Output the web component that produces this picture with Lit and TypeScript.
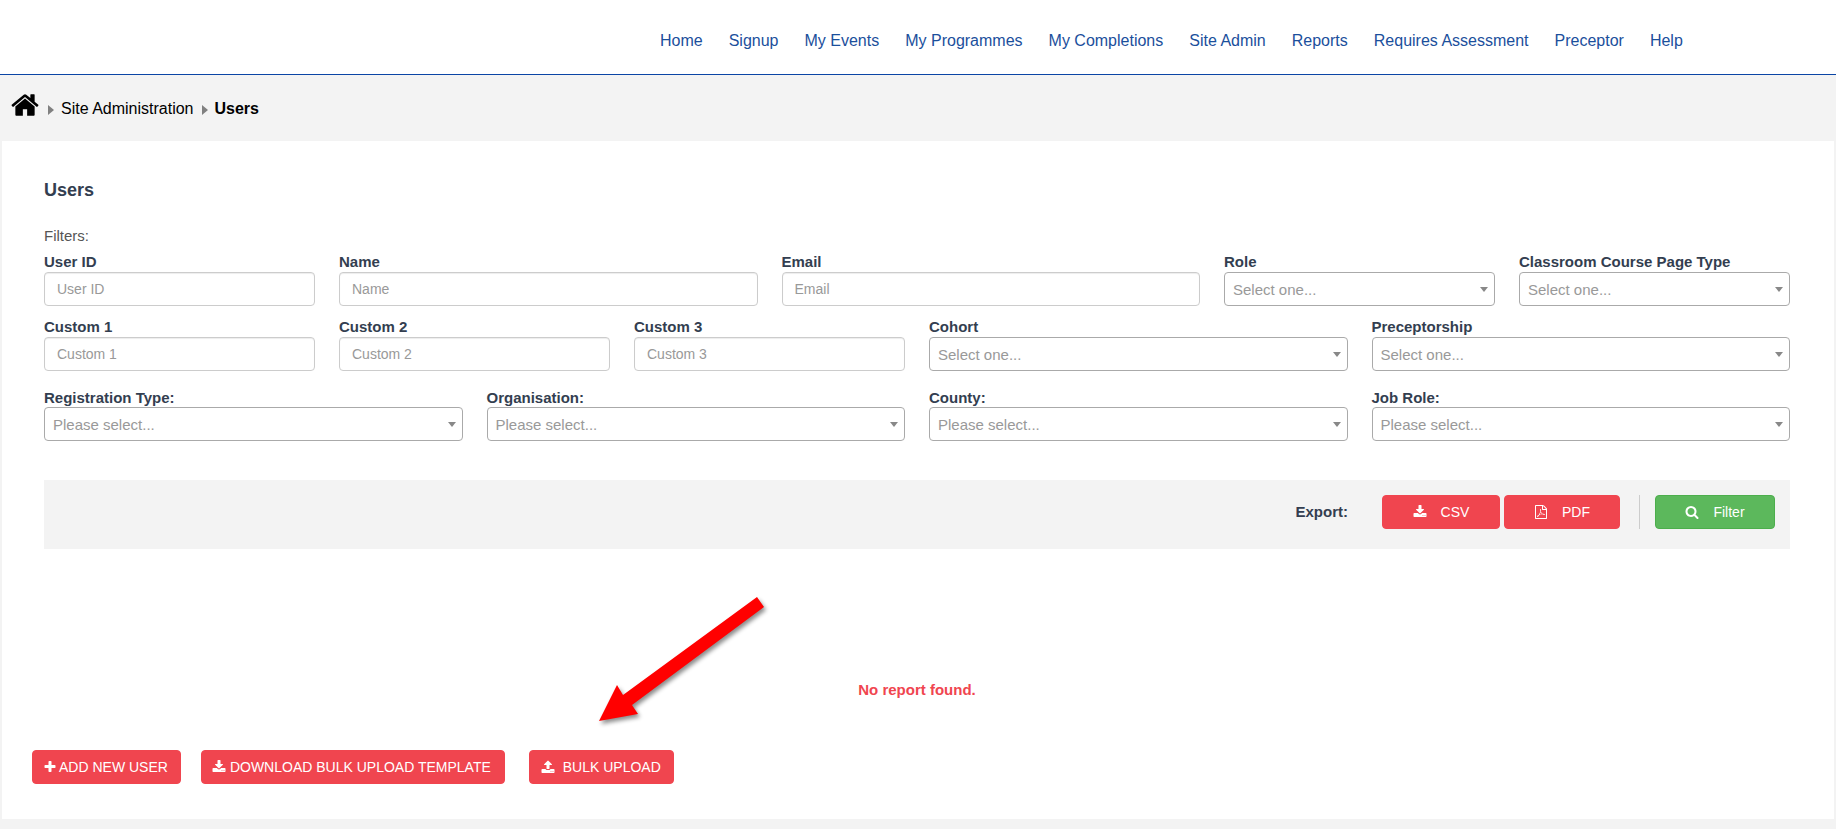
import { LitElement, css, html, svg, type TemplateResult } from "lit";
import { customElement } from "lit/decorators.js";

const ICONS: Record<string, string> = {
  home: "M1472 992v480q0 26-19 45t-45 19h-384v-384h-256v384h-384q-26 0-45-19t-19-45v-480q0-1 .5-3t.5-3l575-474 575 474q1 2 1 6zm223-69l-62 74q-8 9-21 11h-3q-13 0-21-7l-692-577-692 577q-12 8-24 7-13-2-21-11l-62-74q-8-10-7-23.5t11-21.5l719-599q32-26 76-26t76 26l244 204v-195q0-14 9-23t23-9h192q14 0 23 9t9 23v408l219 182q10 8 11 21.5t-7 23.5z",
  download: "M1344 1344q0-26-19-45t-45-19-45 19-19 45 19 45 45 19 45-19 19-45zm256 0q0-26-19-45t-45-19-45 19-19 45 19 45 45 19 45-19 19-45zm128-224v320q0 40-28 68t-68 28h-1472q-40 0-68-28t-28-68v-320q0-40 28-68t68-28h465l135 136q58 56 136 56t136-56l136-136h464q40 0 68 28t28 68zm-325-569q17 41-14 70l-448 448q-18 19-45 19t-45-19l-448-448q-31-29-14-70 17-39 59-39h256v-448q0-26 19-45t45-19h256q26 0 45 19t19 45v448h256q42 0 59 39z",
  upload: "M1344 1472q0-26-19-45t-45-19-45 19-19 45 19 45 45 19 45-19 19-45zm256 0q0-26-19-45t-45-19-45 19-19 45 19 45 45 19 45-19 19-45zm128-224v320q0 40-28 68t-68 28h-1472q-40 0-68-28t-28-68v-320q0-40 28-68t68-28h427q21 56 70.5 92t110.5 36h256q61 0 110.5-36t70.5-92h427q40 0 68 28t28 68zm-325-648q-17 40-59 40h-256v448q0 26-19 45t-45 19h-256q-26 0-45-19t-19-45v-448h-256q-42 0-59-40-17-39 14-69l448-448q18-19 45-19t45 19l448 448q31 30 14 69z",
  search: "M1216 832q0-185-131.5-316.5t-316.5-131.5-316.5 131.5-131.5 316.5 131.5 316.5 316.5 131.5 316.5-131.5 131.5-316.5zm512 832q0 52-38 90t-90 38q-54 0-90-38l-343-342q-179 124-399 124-143 0-273.5-55.5t-225-150-150-225-55.5-273.5 55.5-273.5 150-225 225-150 273.5-55.5 273.5 55.5 225 150 150 225 55.5 273.5q0 220-124 399l343 343q37 37 37 90z",
  plus: "M1600 736v192q0 40-28 68t-68 28h-416v416q0 40-28 68t-68 28h-192q-40 0-68-28t-28-68v-416h-416q-40 0-68-28t-28-68v-192q0-40 28-68t68-28h416v-416q0-40 28-68t68-28h192q40 0 68 28t28 68v416h416q40 0 68 28t28 68z",
  pdf: "M1596 380q28 28 48 76t20 88v1152q0 40-28 68t-68 28h-1344q-40 0-68-28t-28-68v-1600q0-40 28-68t68-28h896q40 0 88 20t76 48zm-444-244v376h376q-10-29-22-41l-313-313q-12-12-41-22zm384 1528v-1024h-416q-40 0-68-28t-28-68v-416h-768v1536h1280zm-514-593q33 26 84 56 59-7 117-7 147 0 177 49 16 22 2 52 0 1-1 2l-2 2v1q-6 38-71 38-48 0-115-20t-130-53q-221 24-392 83-153 262-242 262-15 0-28-7l-24-12q-1-1-6-5-10-10-6-36 9-40 56-91.5t132-96.5q14-9 23 6 2 2 2 4 52-85 107-197 68-136 104-262-24-82-30.5-159.5t6.5-127.5q11-40 42-40h22q23 0 35 15 18 21 9 68-2 6-4 8 1 3 1 8v30q-2 123-14 192 55 164 146 238zm-576 411q52-24 137-158-51 40-87.5 84t-49.5 74zm398-920q-15 42-2 132 1-7 7-44 0-3 7-43 1-4 4-8-1-1-1-2-1-2-1-3-1-22-13-36 0 1-1 2v2zm-124 661q135-54 284-81-2-1-13-9.5t-16-13.5q-76-67-127-176-27 86-83 197-30 56-45 83zm646-16q-24-24-140-24 76 28 124 28 14 0 18-1 0-1-2-3z",
};

const icon = (name: string, size: number): TemplateResult =>
  html`<svg class="icon" width=${size} height=${size} viewBox="0 0 1792 1792" fill="currentColor">
    ${svg`<path d=${ICONS[name]}></path>`}
  </svg>`;

const NAV = ["Home", "Signup", "My Events", "My Programmes", "My Completions", "Site Admin", "Reports", "Requires Assessment", "Preceptor", "Help"];

type Field = { label: string; span: number; placeholder: string; select?: boolean };

const ROWS: Field[][] = [
  [
    { label: "User ID", span: 2, placeholder: "User ID" },
    { label: "Name", span: 3, placeholder: "Name" },
    { label: "Email", span: 3, placeholder: "Email" },
    { label: "Role", span: 2, placeholder: "Select one...", select: true },
    { label: "Classroom Course Page Type", span: 2, placeholder: "Select one...", select: true },
  ],
  [
    { label: "Custom 1", span: 2, placeholder: "Custom 1" },
    { label: "Custom 2", span: 2, placeholder: "Custom 2" },
    { label: "Custom 3", span: 2, placeholder: "Custom 3" },
    { label: "Cohort", span: 3, placeholder: "Select one...", select: true },
    { label: "Preceptorship", span: 3, placeholder: "Select one...", select: true },
  ],
  [
    { label: "Registration Type:", span: 3, placeholder: "Please select...", select: true },
    { label: "Organisation:", span: 3, placeholder: "Please select...", select: true },
    { label: "County:", span: 3, placeholder: "Please select...", select: true },
    { label: "Job Role:", span: 3, placeholder: "Please select...", select: true },
  ],
];

@customElement("app-root")
export class AppRoot extends LitElement {
  private renderField(f: Field): TemplateResult {
    return html`<div class="field" style="grid-column: span ${f.span}">
      <label>${f.label}</label>
      ${f.select
        ? html`<div class="select"><span>${f.placeholder}</span><i class="caret"></i></div>`
        : html`<input type="text" placeholder=${f.placeholder} />`}
    </div>`;
  }

  render(): TemplateResult {
    return html`<header>
        <nav>${NAV.map((n) => html`<a href="#">${n}</a>`)}</nav>
      </header>

      <div class="crumbs">
        <span class="home">${icon("home", 30)}</span>
        <i class="sep"></i>
        <a href="#">Site Administration</a>
        <i class="sep"></i>
        <b>Users</b>
      </div>

      <main class="card">
        <h2>Users</h2>
        <div class="filters-label">Filters:</div>
        <div class="grid">${ROWS.map((r) => r.map((f) => this.renderField(f)))}</div>

        <div class="bar">
          <b class="export">Export:</b>
          <button class="btn red csv">${icon("download", 14)}<span>CSV</span></button>
          <button class="btn red pdf">${icon("pdf", 14)}<span>PDF</span></button>
          <div class="divider"></div>
          <button class="btn green filter">${icon("search", 14)}<span>Filter</span></button>
        </div>

        <p class="empty">No report found.</p>

        <div class="actions">
          <button class="btn red add">${icon("plus", 14)}<span>ADD NEW USER</span></button>
          <button class="btn red template">${icon("download", 14)}<span>DOWNLOAD BULK UPLOAD TEMPLATE</span></button>
          <button class="btn red upload">${icon("upload", 14)}<span>BULK UPLOAD</span></button>
        </div>

        <svg class="arrow" width="190" height="150" viewBox="0 0 190 150">
          <polygon points="162,0 169,10 37,108 43,117 4,124 22,88 28,98" fill="#ff0000"></polygon>
        </svg>
      </main>`;
  }

  static styles = css`
    :host {
      display: block;
      min-height: 829px;
      background: #f3f3f3;
      font-family: "Liberation Sans", Arial, sans-serif;
      font-size: 14px;
      color: #333e50;
    }

    header {
      height: 74px;
      background: #fff;
      border-bottom: 1px solid #0a45a5;
    }

    nav {
      display: flex;
      gap: 26px;
      padding: 32px 0 0 660px;
    }

    nav a {
      color: #1b4f9c;
      font-size: 16px;
      line-height: 18px;
      text-decoration: none;
    }

    .crumbs {
      height: 66px;
      display: flex;
      align-items: center;
      padding: 2px 0 0 10px;
      box-sizing: border-box;
      font-size: 16px;
      color: #000;
    }

    .crumbs a {
      color: #000;
      text-decoration: none;
    }

    .home {
      display: flex;
      margin-top: -8px;
      width: 30px;
    }

    .sep {
      width: 0;
      height: 0;
      border-left: 6px solid #808080;
      border-top: 5.5px solid transparent;
      border-bottom: 5.5px solid transparent;
      margin: 2px 7px 0 8px;
    }

    .card {
      position: relative;
      margin: 0 2px;
      height: 678px;
      box-sizing: border-box;
      padding: 40px 44px 0 42px;
      background: #fff;
    }

    h2 {
      margin: 0;
      font-size: 18px;
      line-height: 18px;
      font-weight: bold;
    }

    .filters-label {
      margin-top: 29px;
      font-size: 15px;
      line-height: 16px;
      color: #555;
    }

    .grid {
      display: grid;
      grid-template-columns: repeat(12, 1fr);
      column-gap: 24px;
      margin-top: 10px;
    }

    .field {
      display: flex;
      flex-direction: column;
      margin-bottom: 13px;
    }

    .field:nth-child(n + 6) {
      margin-bottom: 19px;
    }

    .field:nth-child(n + 11) {
      margin-bottom: 0;
    }

    label {
      height: 16px;
      line-height: 16px;
      margin-bottom: 2px;
      font-size: 15px;
      font-weight: bold;
      white-space: nowrap;
    }

    .field:nth-child(n + 11) label {
      margin-bottom: 1px;
    }

    input {
      height: 34px;
      box-sizing: border-box;
      width: 100%;
      padding: 0 12px;
      border: 1px solid #ccc;
      border-radius: 4px;
      font: 14px "Liberation Sans", Arial, sans-serif;
      box-shadow: inset 0 1px 1px rgba(0, 0, 0, 0.075);
    }

    input::placeholder {
      color: #999;
      opacity: 1;
    }

    .select {
      height: 34px;
      box-sizing: border-box;
      display: flex;
      align-items: center;
      justify-content: space-between;
      padding: 0 6px 0 8px;
      border: 1px solid #aaa;
      border-radius: 4px;
      font-size: 15px;
      color: #999;
    }

    .caret {
      border-top: 5px solid #888;
      border-left: 4px solid transparent;
      border-right: 4px solid transparent;
    }

    .bar {
      display: flex;
      align-items: flex-start;
      box-sizing: border-box;
      height: 69px;
      margin-top: 39px;
      padding: 15px 15px 0 0;
      background: #f3f3f3;
    }

    .export {
      margin-left: auto;
      margin-right: 34px;
      margin-top: 9px;
      font-size: 15px;
      line-height: 16px;
    }

    .btn {
      display: inline-flex;
      align-items: center;
      justify-content: center;
      height: 34px;
      padding: 0;
      border: 1px solid transparent;
      border-radius: 4px;
      color: #fff;
      font: 14px "Liberation Sans", Arial, sans-serif;
    }

    .red {
      background: #f0454f;
      border-color: #f0454f;
    }

    .green {
      background: #5cb85c;
      border-color: #4cae4c;
    }

    .csv,
    .pdf,
    .filter {
      gap: 14px;
    }

    .csv {
      width: 118px;
    }

    .pdf {
      width: 116px;
      margin-left: 4px;
    }

    .divider {
      width: 1px;
      height: 34px;
      margin: 0 15px 0 19px;
      background: #ccc;
    }

    .filter {
      width: 120px;
    }

    .empty {
      margin: 133px 0 0;
      text-align: center;
      font-size: 15px;
      font-weight: bold;
      line-height: 16px;
      color: #f0454f;
    }

    .actions {
      display: flex;
      margin: 52px 0 0 -12px;
      gap: 20px;
    }

    .add {
      gap: 2px;
      padding: 0 12px 0 10px;
    }

    .template {
      gap: 4px;
      padding: 0 13px 0 10px;
    }

    .upload {
      gap: 8px;
      margin-left: 4px;
      padding: 0 12px 0 11px;
    }

    .arrow {
      position: absolute;
      left: 593px;
      top: 456px;
      overflow: visible;
      filter: drop-shadow(2px 3px 2px rgba(0, 0, 0, 0.45));
    }
  `;
}

declare global {
  interface HTMLElementTagNameMap {
    "app-root": AppRoot;
  }
}
